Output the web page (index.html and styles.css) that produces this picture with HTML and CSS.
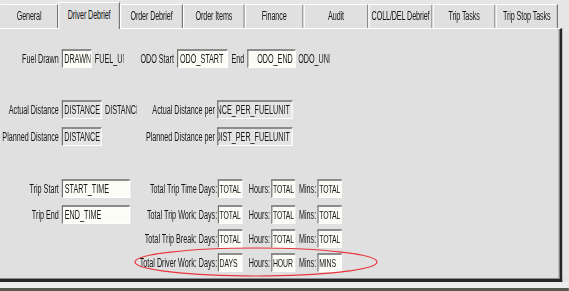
FILE: index.html
```html
<!DOCTYPE html>
<html lang="en">
<head>
    <meta charset="UTF-8">
    <meta name="viewport" content="width=device-width, initial-scale=1.0">
    <title>Driver Debrief</title>
    <link rel="stylesheet" href="styles.css">
</head>
<body>
    <div class="screen">
        <!-- Tabs -->
        <div class="tabs">
            <div class="tab t-general">General</div>
            <div class="tab t-driver active">Driver Debrief</div>
            <div class="tab t-order">Order Debrief</div>
            <div class="tab t-items">Order Items</div>
            <div class="tab t-finance">Finance</div>
            <div class="tab t-audit">Audit</div>
            <div class="tab t-coll">COLL/DEL Debrief</div>
            <div class="tab t-trip">Trip Tasks</div>
            <div class="tab t-stop">Trip Stop Tasks</div>
        </div>

        <!-- Driver Debrief panel -->
        <div class="panel">
            <div class="row r1">
                <label class="lbl w-main">Fuel Drawn</label>
                <div class="field w-drawn">DRAWN</div>
                <div class="unit w-fuel">FUEL_UNIT</div>
                <label class="lbl w-odo">ODO Start</label>
                <div class="field w-odo-start">ODO_START</div>
                <label class="lbl w-end">End</label>
                <div class="field w-odo-end end">ODO_END</div>
                <div class="unit w-odo-unit">ODO_UNIT</div>
            </div>

            <div class="row r2">
                <label class="lbl w-main">Actual Distance</label>
                <div class="field ro w-dist">DISTANCE</div>
                <div class="unit w-dist-unit">DISTANCE</div>
                <label class="lbl w-per">Actual Distance per</label>
                <div class="field ro w-per-in end">DISTANCE_PER_FUELUNIT</div>
            </div>

            <div class="row r3">
                <label class="lbl w-main">Planned Distance</label>
                <div class="field ro w-dist">DISTANCE</div>
                <div class="unit w-dist-unit"></div>
                <label class="lbl w-per">Planned Distance per</label>
                <div class="field ro w-per-in end">PLAN_DIST_PER_FUELUNIT</div>
            </div>

            <div class="row r4">
                <div class="left">
                    <label class="lbl w-main">Trip Start</label>
                    <div class="field w-time">START_TIME</div>
                </div>
                <label class="lbl w-days">Total Trip Time Days:</label>
                <div class="field w-total">TOTAL</div>
                <label class="lbl w-hours">Hours:</label>
                <div class="field w-total h">TOTAL</div>
                <label class="lbl w-mins">Mins:</label>
                <div class="field w-total m">TOTAL</div>
            </div>

            <div class="row r5">
                <div class="left">
                    <label class="lbl w-main">Trip End</label>
                    <div class="field w-time">END_TIME</div>
                </div>
                <label class="lbl w-days">Total Trip Work: Days:</label>
                <div class="field w-total">TOTAL</div>
                <label class="lbl w-hours">Hours:</label>
                <div class="field w-total h">TOTAL</div>
                <label class="lbl w-mins">Mins:</label>
                <div class="field w-total m">TOTAL</div>
            </div>

            <div class="row r6">
                <div class="left"></div>
                <label class="lbl w-days">Total Trip Break: Days:</label>
                <div class="field w-total">TOTAL</div>
                <label class="lbl w-hours">Hours:</label>
                <div class="field w-total h">TOTAL</div>
                <label class="lbl w-mins">Mins:</label>
                <div class="field w-total m">TOTAL</div>
            </div>

            <div class="row r7">
                <div class="left"></div>
                <label class="lbl w-days">Total Driver Work: Days:</label>
                <div class="field w-total">DAYS</div>
                <label class="lbl w-hours">Hours:</label>
                <div class="field w-total h">HOUR</div>
                <label class="lbl w-mins">Mins:</label>
                <div class="field w-total m">MINS</div>
            </div>
        </div>

        <div class="foot"></div>
    </div>

    <!-- Anotación en rojo -->
    <svg class="mark" width="569" height="291" viewBox="0 0 569 291">
        <ellipse cx="256" cy="262" rx="121" ry="14" fill="none" stroke="#e8353c" stroke-width="1.2"/>
    </svg>
</body>
</html>
```

FILE: styles.css
```css
* {
    box-sizing: border-box;
}

body {
    margin: 0;
    width: 569px;
    height: 291px;
    overflow: hidden;
    position: relative;
    background-color: #e6e6e6;
    font-family: "Liberation Sans", Arial, sans-serif;
    font-size: 12px;
    color: #161616;
}

/* The old form is drawn condensed: lay it out wide, then squeeze it */
.screen {
    width: 948px;
    height: 291px;
    transform: scaleX(0.6);
    transform-origin: 0 0;
}

/* Tabs */
.tabs {
    display: flex;
    align-items: flex-end;
    height: 28px;
}

.tab {
    flex: none;
    height: 24px;
    line-height: 22px;
    text-align: center;
    white-space: nowrap;
    letter-spacing: -0.2px;
    background-color: #e0e0e0;
    border-top: 1px solid #fff;
    border-left: 2px solid #fff;
    border-right: 2px solid #777;
}

.tab.active {
    position: relative;
    z-index: 1;
    height: 27px;
    margin-bottom: -1px;
    line-height: 24px;
}

.t-general { width: 97px; border-left-color: #e0e0e0; }
.t-driver { width: 103px; }
.t-order { width: 105px; }
.t-items { width: 103px; }
.t-finance { width: 98px; }
.t-audit { width: 108px; }
.t-coll { width: 107px; }
.t-trip { width: 105px; }
.t-stop { width: 104px; }

/* Panel */
.panel {
    width: 937px;
    height: 254px;
    background-color: #e0e0e0;
    border-top: 1px solid #fff;
    border-right: 4px solid #262626;
    border-bottom: 3px solid #262626;
    box-shadow: inset -2px -1px 0 #8a8a8a;
}

.foot {
    height: 9px;
    background-color: #ececec;
    border-bottom: 3px solid #57574a;
}

.row {
    display: flex;
    align-items: center;
    height: 19px;
}

.r1 { margin-top: 20px; }
.r2 { margin-top: 32px; }
.r3 { margin-top: 8px; }
.r4 { margin-top: 33px; }
.r5 { margin-top: 7px; }
.r6 { margin-top: 5px; }
.r7 { margin-top: 5px; }

.left {
    display: flex;
    align-items: center;
    width: 217px;
    flex: none;
}

.lbl {
    flex: none;
    text-align: right;
    white-space: nowrap;
}

.unit {
    flex: none;
    overflow: hidden;
    white-space: nowrap;
    margin-left: 5px;
}

.field {
    flex: none;
    display: flex;
    align-items: center;
    height: 19px;
    padding: 0 3px;
    overflow: hidden;
    white-space: nowrap;
    background-color: #fcfcf6;
    border-top: 2px solid #8c8c8c;
    border-left: 2px solid #707070;
    border-right: 2px solid #fff;
    border-bottom: 1px solid #fff;
}

.field.ro {
    background-color: #e4e4e4;
}

.field.end {
    justify-content: flex-end;
}

/* Column widths (before the squeeze) */
.w-main { width: 98px; }
.w-drawn { width: 50px; margin-left: 5px; padding: 0 2px; }
.w-fuel { width: 48px; }
.w-odo { width: 84px; }
.w-odo-start { width: 85px; margin-left: 5px; }
.w-end { width: 27px; }
.w-odo-end { width: 81px; margin-left: 5px; }
.w-odo-unit { width: 53px; margin-left: 4px; }

.w-dist { width: 67px; margin-left: 5px; padding: 0 2px; }
.w-dist-unit { width: 53px; }
.w-per { width: 130px; }
.w-per-in { width: 126px; margin-left: 4px; }

.w-time { width: 114px; margin-left: 5px; }
.w-days { width: 145px; }
.w-total {
    width: 41px;
    margin-left: 1px;
    padding: 0 1px;
    border-right-width: 1px;
    font-size: 11.5px;
    letter-spacing: -0.2px;
}
.w-total.h { width: 40px; margin-left: 2px; }
.w-total.m { margin-left: 2px; }
.w-hours { width: 46px; }
.w-mins { width: 35px; }

/* Red annotation */
.mark {
    position: absolute;
    left: 0;
    top: 0;
    pointer-events: none;
}
```
